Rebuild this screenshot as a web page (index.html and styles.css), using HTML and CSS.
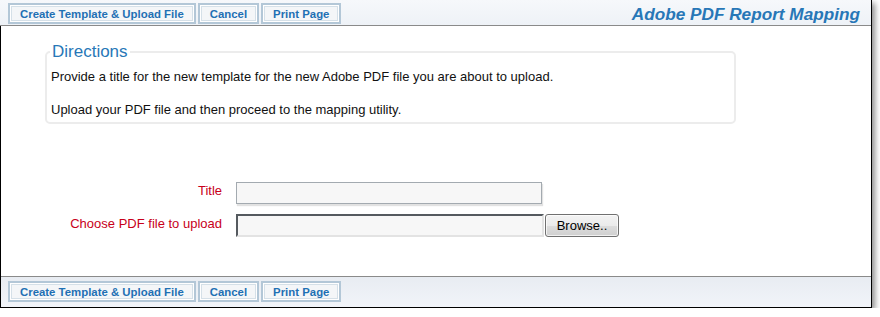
FILE: index.html
```html
<!DOCTYPE html>
<html lang="en">
<head>
  <meta charset="UTF-8">
  <title>Adobe PDF Report Mapping</title>
  <link rel="stylesheet" href="styles.css">
</head>
<body>
  <div class="window">
    <div class="toolbar toolbar-top">
      <button class="tb-btn" type="button">Create Template &amp; Upload File</button>
      <button class="tb-btn" type="button">Cancel</button>
      <button class="tb-btn" type="button">Print Page</button>
      <h1 class="page-title">Adobe PDF Report Mapping</h1>
    </div>

    <div class="content">
      <fieldset class="directions">
        <legend>Directions</legend>
        <p>Provide a title for the new template for the new Adobe PDF file you are about to upload.</p>
        <p>Upload your PDF file and then proceed to the mapping utility.</p>
      </fieldset>

      <form class="upload-form">
        <label for="title">Title</label>
        <div class="field">
          <input type="text" id="title" class="text-input">
        </div>

        <label for="pdffile">Choose PDF file to upload</label>
        <div class="field">
          <input type="text" id="pdffile" class="file-input" readonly>
          <button type="button" class="browse-btn">Browse..</button>
        </div>
      </form>
    </div>

    <div class="toolbar toolbar-bottom">
      <button class="tb-btn" type="button">Create Template &amp; Upload File</button>
      <button class="tb-btn" type="button">Cancel</button>
      <button class="tb-btn" type="button">Print Page</button>
    </div>
  </div>
</body>
</html>
```

FILE: styles.css
```css
:root {
  --blue: #1f70b4;
  --title-blue: #2777b7;
  --label-red: #c8001a;
  --text: #111;
  --btn-border: #b3c7d7;
  --bar-line: #8a8a8a;
}

* {
  margin: 0;
  padding: 0;
  box-sizing: border-box;
}

body {
  font-family: "Liberation Sans", Arial, sans-serif;
  font-size: 13px;
  color: var(--text);
  background: #fff;
}

.window {
  width: 872px;
  height: 308px;
  border: 1px solid #000;
  border-top: none;
  background: #fff;
  display: flex;
  flex-direction: column;
  box-shadow: 3px 3px 6px rgba(0, 0, 0, 0.45);
}

/* toolbars */
.toolbar {
  display: flex;
  align-items: flex-start;
  gap: 2px;
  background: linear-gradient(#f6f8fb, #eef2f7);
}

.toolbar-top {
  height: 26px;
  margin-left: -1px;
  padding: 3px 8px 0;
  border-bottom: 1px solid var(--bar-line);
}

.toolbar-bottom {
  height: 31px;
  padding: 4px 7px 0;
  border-top: 1px solid var(--bar-line);
  background: linear-gradient(#e8ecf2, #f1f4f9);
}

.tb-btn {
  height: 21px;
  padding: 0 10px;
  font-family: inherit;
  font-size: 11.4px;
  font-weight: bold;
  color: var(--blue);
  background: #f4f6f8;
  border: 2px solid var(--btn-border);
  box-shadow: inset 0 0 0 1px #fff, inset 0 0 0 2px #d5e0e8;
  cursor: pointer;
}

.page-title {
  margin-left: auto;
  margin-top: 1px;
  padding-right: 3px;
  font-size: 17.2px;
  font-weight: bold;
  font-style: italic;
  color: var(--title-blue);
  line-height: 20px;
}

/* main area */
.content {
  flex: 1;
}

.directions {
  width: 691px;
  margin: 16px 0 0 44px;
  padding: 0 4px 4px;
  border: 2px solid #ececec;
  border-radius: 5px;
}

.directions legend {
  padding: 0 2px;
  margin-left: -1px;
  font-size: 17px;
  line-height: 20px;
  color: var(--title-blue);
}

.directions p {
  line-height: 17px;
  margin-top: 6px;
}

.directions p + p {
  margin-top: 16px;
}

.upload-form {
  display: grid;
  grid-template-columns: 221px auto;
  column-gap: 14px;
  row-gap: 10px;
  align-items: center;
  margin-top: 58px;
}

.upload-form label {
  text-align: right;
  color: var(--label-red);
  padding-bottom: 5px;
}

.field {
  display: flex;
  align-items: center;
  gap: 1px;
}

.text-input {
  width: 306px;
  height: 22px;
  border: 1px solid #a3aab0;
  background: #f7f7f7;
  box-shadow: 1px 2px 1px #e2e2e2;
  font-family: inherit;
  font-size: 13px;
  outline: none;
}

.file-input {
  width: 308px;
  height: 23px;
  border: 2px solid #e3e3e3;
  border-top-color: #555a5f;
  border-left-color: #555a5f;
  background: #f7f7f7;
  font-family: inherit;
  font-size: 13px;
  outline: none;
}

.browse-btn {
  width: 74px;
  height: 23px;
  font-family: inherit;
  font-size: 13px;
  color: #000;
  border: 1px solid #707070;
  border-radius: 3px;
  background: linear-gradient(#f3f3f3 0%, #ebebeb 50%, #dddddd 51%, #cfcfcf 100%);
  box-shadow: inset 0 0 0 1px rgba(255, 255, 255, 0.7);
  cursor: pointer;
}
```
